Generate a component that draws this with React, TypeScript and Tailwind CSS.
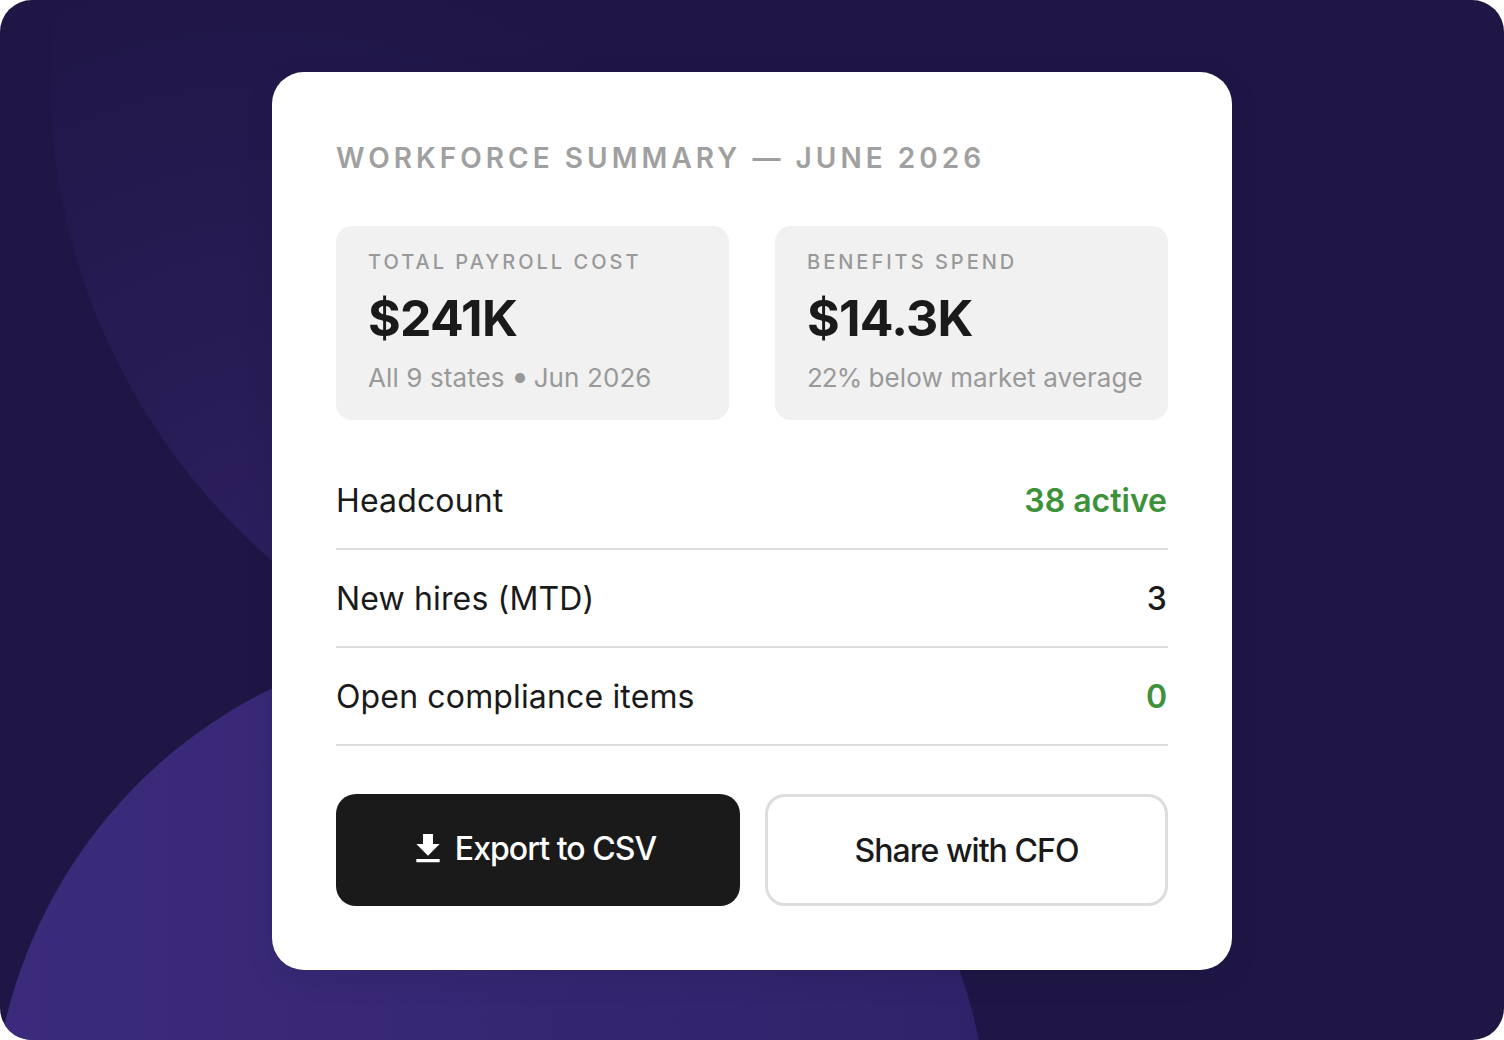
import type { ReactNode } from 'react';

const font = { fontFamily: 'Inter, "Noto Sans", sans-serif' };

function Stat({ label, value, note }: { label: string; value: string; note: ReactNode }) {
  return (
    <div className="flex h-[194px] flex-col rounded-[16px] bg-[#f1f1f1] px-8 pt-[22px]">
      <div className="text-[20px] leading-[28px] font-medium tracking-[0.15em] whitespace-nowrap text-[#999999]">{label}</div>
      <div className="mt-[12px] text-[50px] leading-[60px] font-bold tracking-[-0.015em] text-[#1a1a1a]">{value}</div>
      <div className="mt-[14px] text-[26px] leading-[32px] tracking-[0.1px] whitespace-nowrap text-[#999999]">{note}</div>
    </div>
  );
}

function Row({ label, value, green }: { label: string; value: string; green?: boolean }) {
  return (
    <div className="flex h-[98px] items-center justify-between border-b-2 border-[#dddddd] pt-[2px] pr-[1px]">
      <span className="text-[32px] tracking-[0.15px] text-[#1a1a1a]">{label}</span>
      <span className={green ? 'text-[32px] font-semibold text-[#3d9239]' : 'text-[32px] font-medium tracking-[0.15px] text-[#1a1a1a]'}>{value}</span>
    </div>
  );
}

export default function App() {
  return (
    <div style={font} className="relative flex h-[1040px] w-[1504px] items-start justify-center overflow-hidden rounded-[32px] bg-[#1f1646] pt-[72px]">
      {/* background blobs */}
      <div className="absolute top-[-564px] left-[50px] h-[1280px] w-[1280px] rounded-full bg-[radial-gradient(circle_at_17%_88%,#2d1f5f_0%,#281c56_12%,#1f1646_40%)]" />
      <div className="absolute top-[638px] left-[-8px] h-[996px] w-[996px] rounded-full bg-[linear-gradient(90deg,#3c2b7c_0%,#30226a_100%)]" />

      <div className="relative flex h-[898px] w-[960px] flex-col rounded-[32px] bg-white px-16 pt-[68px] shadow-[0_8px_32px_rgba(0,0,0,0.08)]">
        <h1 className="text-[28px] leading-[36px] font-semibold tracking-[0.144em] whitespace-nowrap text-[#a0a0a0]">WORKFORCE SUMMARY — JUNE 2026</h1>

        <div className="mt-[50px] grid grid-cols-2 gap-[46px]">
          <Stat
            label="TOTAL PAYROLL COST"
            value="$241K"
            note={
              <>
                All 9 states <span className="mr-[-1.5px] ml-[-1px] text-[32px] leading-[0] tracking-[-0.04em]">•</span> Jun 2026
              </>
            }
          />
          <Stat
            label="BENEFITS SPEND"
            value="$14.3K"
            note={
              <>
                <span className="tracking-[-0.04em]">22%</span> below market average
              </>
            }
          />
        </div>

        <div className="mt-[32px] flex flex-col">
          <Row label="Headcount" value="38 active" green />
          <Row label="New hires (MTD)" value="3" />
          <Row label="Open compliance items" value="0" green />
        </div>

        <div className="mt-[48px] grid grid-cols-[404px_403px] gap-[25px]">
          <button className="flex h-[112px] items-center justify-center gap-[7px] rounded-[20px] bg-[#1a1a1a] pr-[12px] pb-[2px] text-[32px] font-medium tracking-[-0.03em] text-white">
            <svg viewBox="0 0 24 24" className="h-10 w-10 fill-white">
              <path d="M19 9h-4V3H9v6H5l7 7 7-7zM5 18v2h14v-2H5z" />
            </svg>
            Export to CSV
          </button>
          <button className="flex h-[112px] items-center justify-center rounded-[20px] border-[3px] border-[#dddddd] bg-white pt-[2px] text-[32px] font-medium tracking-[-0.03em] text-[#1a1a1a]">
            Share with CFO
          </button>
        </div>
      </div>
    </div>
  );
}
